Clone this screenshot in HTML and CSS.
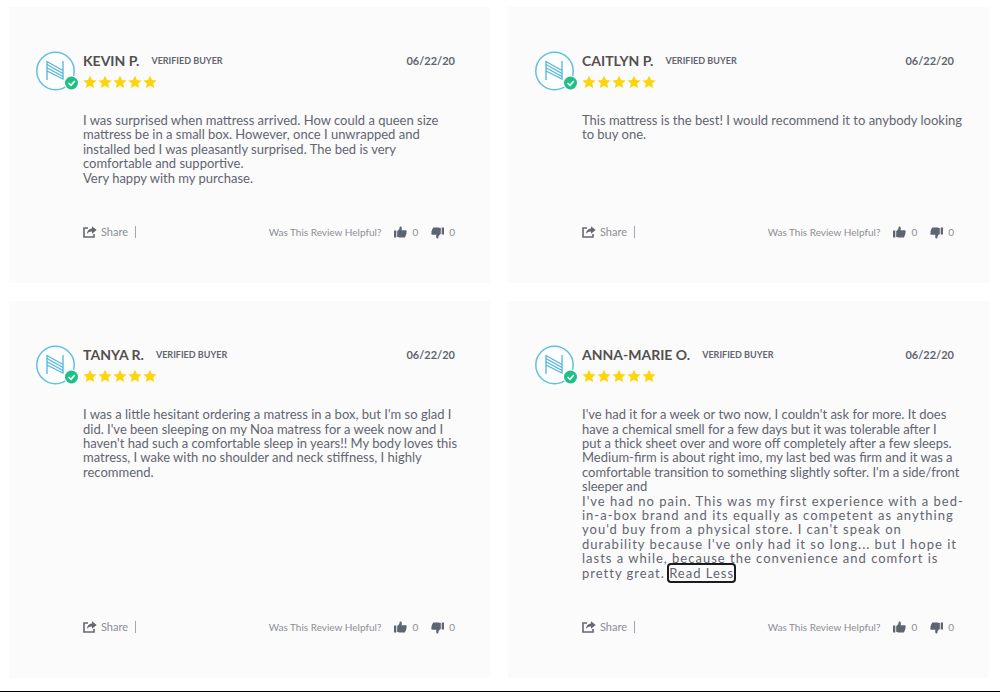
FILE: index.html
```html
<!DOCTYPE html>
<html lang="en">
<head>
<meta charset="utf-8">
<title>Customer reviews</title>
<link rel="stylesheet" href="styles.css">
</head>
<body>
<svg class="sprite" aria-hidden="true">
  <symbol id="avatar" viewBox="0 0 44 40">
    <circle cx="19.5" cy="20" r="18.7" fill="#fdfefe" stroke="#62bfe0" stroke-width="1.5"/>
    <g fill="none" stroke="#52b5da" stroke-width="1.3">
      <path d="M11 29V10.500L27 19.500M27 10V28L11 20"/>
      <path d="M11 13.500L27 22.500M11 16.800L27 25.500"/>
    </g>
    <circle cx="35.500" cy="32" r="7.500" fill="#fbfbfb"/>
    <circle cx="35.500" cy="32" r="6.500" fill="#1fc085"/>
    <path d="M32.500 32L35 34.300L38.800 30" fill="none" stroke="#fff" stroke-width="1.600"/>
  </symbol>
  <symbol id="stars" viewBox="0 0 74 12">
    <g fill="#fdd50b">
      <path id="star" d="M7 -.3L9 3.900L13.600 4.400L10.200 7.500L11.200 12L7 9.700L2.800 12L3.800 7.500L.4 4.400L5 3.900Z"/>
      <use href="#star" x="15"/><use href="#star" x="30"/><use href="#star" x="45"/><use href="#star" x="60"/>
    </g>
  </symbol>
  <symbol id="share" viewBox="0 0 14 12">
    <path d="M5 2H1V11H11V8" fill="none" stroke="#65686f" stroke-width="1.600"/>
    <path d="M9 .3L13.700 4L9 7.700V5.500C6.500 5.400 5 6.300 3.800 8.200C4 4.700 6 2.700 9 2.400Z" fill="#65686f"/>
  </symbol>
  <symbol id="thumb" viewBox="0 0 13 13">
    <path d="M0 4.500H2.300V11.500H0ZM3.200 5C5 4.200 5.600 2.700 5.700.8C7.200 0 8.400 1.300 7.600 4.300H11.500C13 4.500 13 6 12.300 6.300C12.800 7 12.600 8 12 8.300C12.300 9 12 9.800 11.300 10C11.500 11 11 11.600 10 11.600H6C5 11.600 4.300 11 3.200 11Z" fill="#5d6572"/>
  </symbol>
</svg>
<main class="reviews">
  <article class="review">
    <svg class="avatar" aria-hidden="true"><use href="#avatar"/></svg>
    <div class="content">
      <header class="head">
        <h2 class="name">KEVIN P.</h2><span class="buyer">VERIFIED BUYER</span><time class="date">06/22/20</time>
      </header>
      <svg class="stars" role="img" aria-label="5 stars"><use href="#stars"/></svg>
      <p class="text">I was surprised when mattress arrived. How could a queen size<br>mattress be in a small box. However, once I unwrapped and<br>installed bed I was pleasantly surprised. The bed is very<br>comfortable and supportive.<br>Very happy with my purchase.</p>
      <footer class="foot">
        <button class="share"><svg class="share-icon" aria-hidden="true"><use href="#share"/></svg>Share</button>
        <span class="question">Was This Review Helpful?</span>
        <button class="vote" aria-label="Helpful, 0"><svg class="thumb" aria-hidden="true"><use href="#thumb"/></svg>0</button>
        <button class="vote" aria-label="Not helpful, 0"><svg class="thumb down" aria-hidden="true"><use href="#thumb"/></svg>0</button>
      </footer>
    </div>
  </article>
  <article class="review">
    <svg class="avatar" aria-hidden="true"><use href="#avatar"/></svg>
    <div class="content">
      <header class="head">
        <h2 class="name">CAITLYN P.</h2><span class="buyer">VERIFIED BUYER</span><time class="date">06/22/20</time>
      </header>
      <svg class="stars" role="img" aria-label="5 stars"><use href="#stars"/></svg>
      <p class="text">This mattress is the best! I would recommend it to anybody looking<br>to buy one.</p>
      <footer class="foot">
        <button class="share"><svg class="share-icon" aria-hidden="true"><use href="#share"/></svg>Share</button>
        <span class="question">Was This Review Helpful?</span>
        <button class="vote" aria-label="Helpful, 0"><svg class="thumb" aria-hidden="true"><use href="#thumb"/></svg>0</button>
        <button class="vote" aria-label="Not helpful, 0"><svg class="thumb down" aria-hidden="true"><use href="#thumb"/></svg>0</button>
      </footer>
    </div>
  </article>
  <article class="review">
    <svg class="avatar" aria-hidden="true"><use href="#avatar"/></svg>
    <div class="content">
      <header class="head">
        <h2 class="name">TANYA R.</h2><span class="buyer">VERIFIED BUYER</span><time class="date">06/22/20</time>
      </header>
      <svg class="stars" role="img" aria-label="5 stars"><use href="#stars"/></svg>
      <p class="text">I was a little hesitant ordering a matress in a box, but I'm so glad I<br>did. I've been sleeping on my Noa matress for a week now and I<br>haven't had such a comfortable sleep in years!! My body loves this<br>matress, I wake with no shoulder and neck stiffness, I highly<br>recommend.</p>
      <footer class="foot">
        <button class="share"><svg class="share-icon" aria-hidden="true"><use href="#share"/></svg>Share</button>
        <span class="question">Was This Review Helpful?</span>
        <button class="vote" aria-label="Helpful, 0"><svg class="thumb" aria-hidden="true"><use href="#thumb"/></svg>0</button>
        <button class="vote" aria-label="Not helpful, 0"><svg class="thumb down" aria-hidden="true"><use href="#thumb"/></svg>0</button>
      </footer>
    </div>
  </article>
  <article class="review">
    <svg class="avatar" aria-hidden="true"><use href="#avatar"/></svg>
    <div class="content">
      <header class="head">
        <h2 class="name">ANNA-MARIE O.</h2><span class="buyer">VERIFIED BUYER</span><time class="date">06/22/20</time>
      </header>
      <svg class="stars" role="img" aria-label="5 stars"><use href="#stars"/></svg>
      <p class="text">I've had it for a week or two now, I couldn't ask for more. It does<br>have a chemical smell for a few days but it was tolerable after I<br>put a thick sheet over and wore off completely after a few sleeps.<br>Medium-firm is about right imo, my last bed was firm and it was a<br>comfortable transition to something slightly softer. I'm a side/front<br>sleeper and<br><span class="expanded">I've had no pain. This was my first experience with a bed-<br>in-a-box brand and its equally as competent as anything<br>you'd buy from a physical store. I can't speak on<br>durability because I've only had it so long... but I hope it<br>lasts a while, because the convenience and comfort is<br>pretty great. <a class="less" href="#">Read Less</a></span></p>
      <footer class="foot">
        <button class="share"><svg class="share-icon" aria-hidden="true"><use href="#share"/></svg>Share</button>
        <span class="question">Was This Review Helpful?</span>
        <button class="vote" aria-label="Helpful, 0"><svg class="thumb" aria-hidden="true"><use href="#thumb"/></svg>0</button>
        <button class="vote" aria-label="Not helpful, 0"><svg class="thumb down" aria-hidden="true"><use href="#thumb"/></svg>0</button>
      </footer>
    </div>
  </article>
</main>
</body>
</html>
```
FILE: styles.css
```css
* { box-sizing: border-box; }
body {
  margin: 0;
  background: #fff;
  color: #626570;
  font-family: Lato, "Open Sans", sans-serif;
  font-size: 13px;
}
.sprite { position: absolute; width: 0; height: 0; }
.reviews {
  display: grid;
  grid-template-columns: repeat(2, minmax(0, 1fr));
  gap: 18px;
  padding: 7px 11px 13px 9px;
  border-bottom: 1px solid #000;
}
.review {
  display: flex;
  gap: 3px;
  padding: 44px 35px 41px 27px;
  background: #fbfbfb;
}
.avatar { flex: none; width: 44px; height: 40px; }
.content {
  display: flex;
  flex: 1;
  flex-direction: column;
  min-width: 0;
}
.head {
  display: flex;
  align-items: center;
  height: 18px;
}
.name {
  margin: 0 12px 0 0;
  color: #54504f;
  font-size: 14px;
  font-weight: 700;
}
.buyer { font-size: 9px; font-weight: 700; }
.date {
  margin-left: auto;
  font-size: 11px;
  font-weight: 700;
}
.stars {
  width: 74px;
  height: 12px;
  margin-top: 7px;
  overflow: visible;
}
.text {
  margin: 25px 0 37px;
  line-height: 1.11;
  white-space: nowrap;
}
.expanded { letter-spacing: 1px; }
.less {
  background: #fbfbfb;
  color: inherit;
  text-decoration: none;
  outline: 2px solid #1c1c1e;
  border-radius: 2px;
}
.foot {
  display: flex;
  align-items: center;
  height: 20px;
  margin-top: auto;
  color: #8c8e94;
  font-size: 10px;
}
button {
  display: flex;
  align-items: center;
  padding: 0;
  border: 0;
  background: none;
  color: inherit;
  font: inherit;
  cursor: pointer;
}
.share {
  gap: 4px;
  padding-right: 7px;
  border-right: 1px solid #a5a6aa;
  font-size: 11px;
  line-height: 10px;
}
.share-icon { width: 14px; height: 12px; }
.question { margin-left: auto; }
.vote { gap: 5px; margin-left: 13px; }
.thumb { width: 13px; height: 13px; }
.down { transform: rotate(180deg); }
```
